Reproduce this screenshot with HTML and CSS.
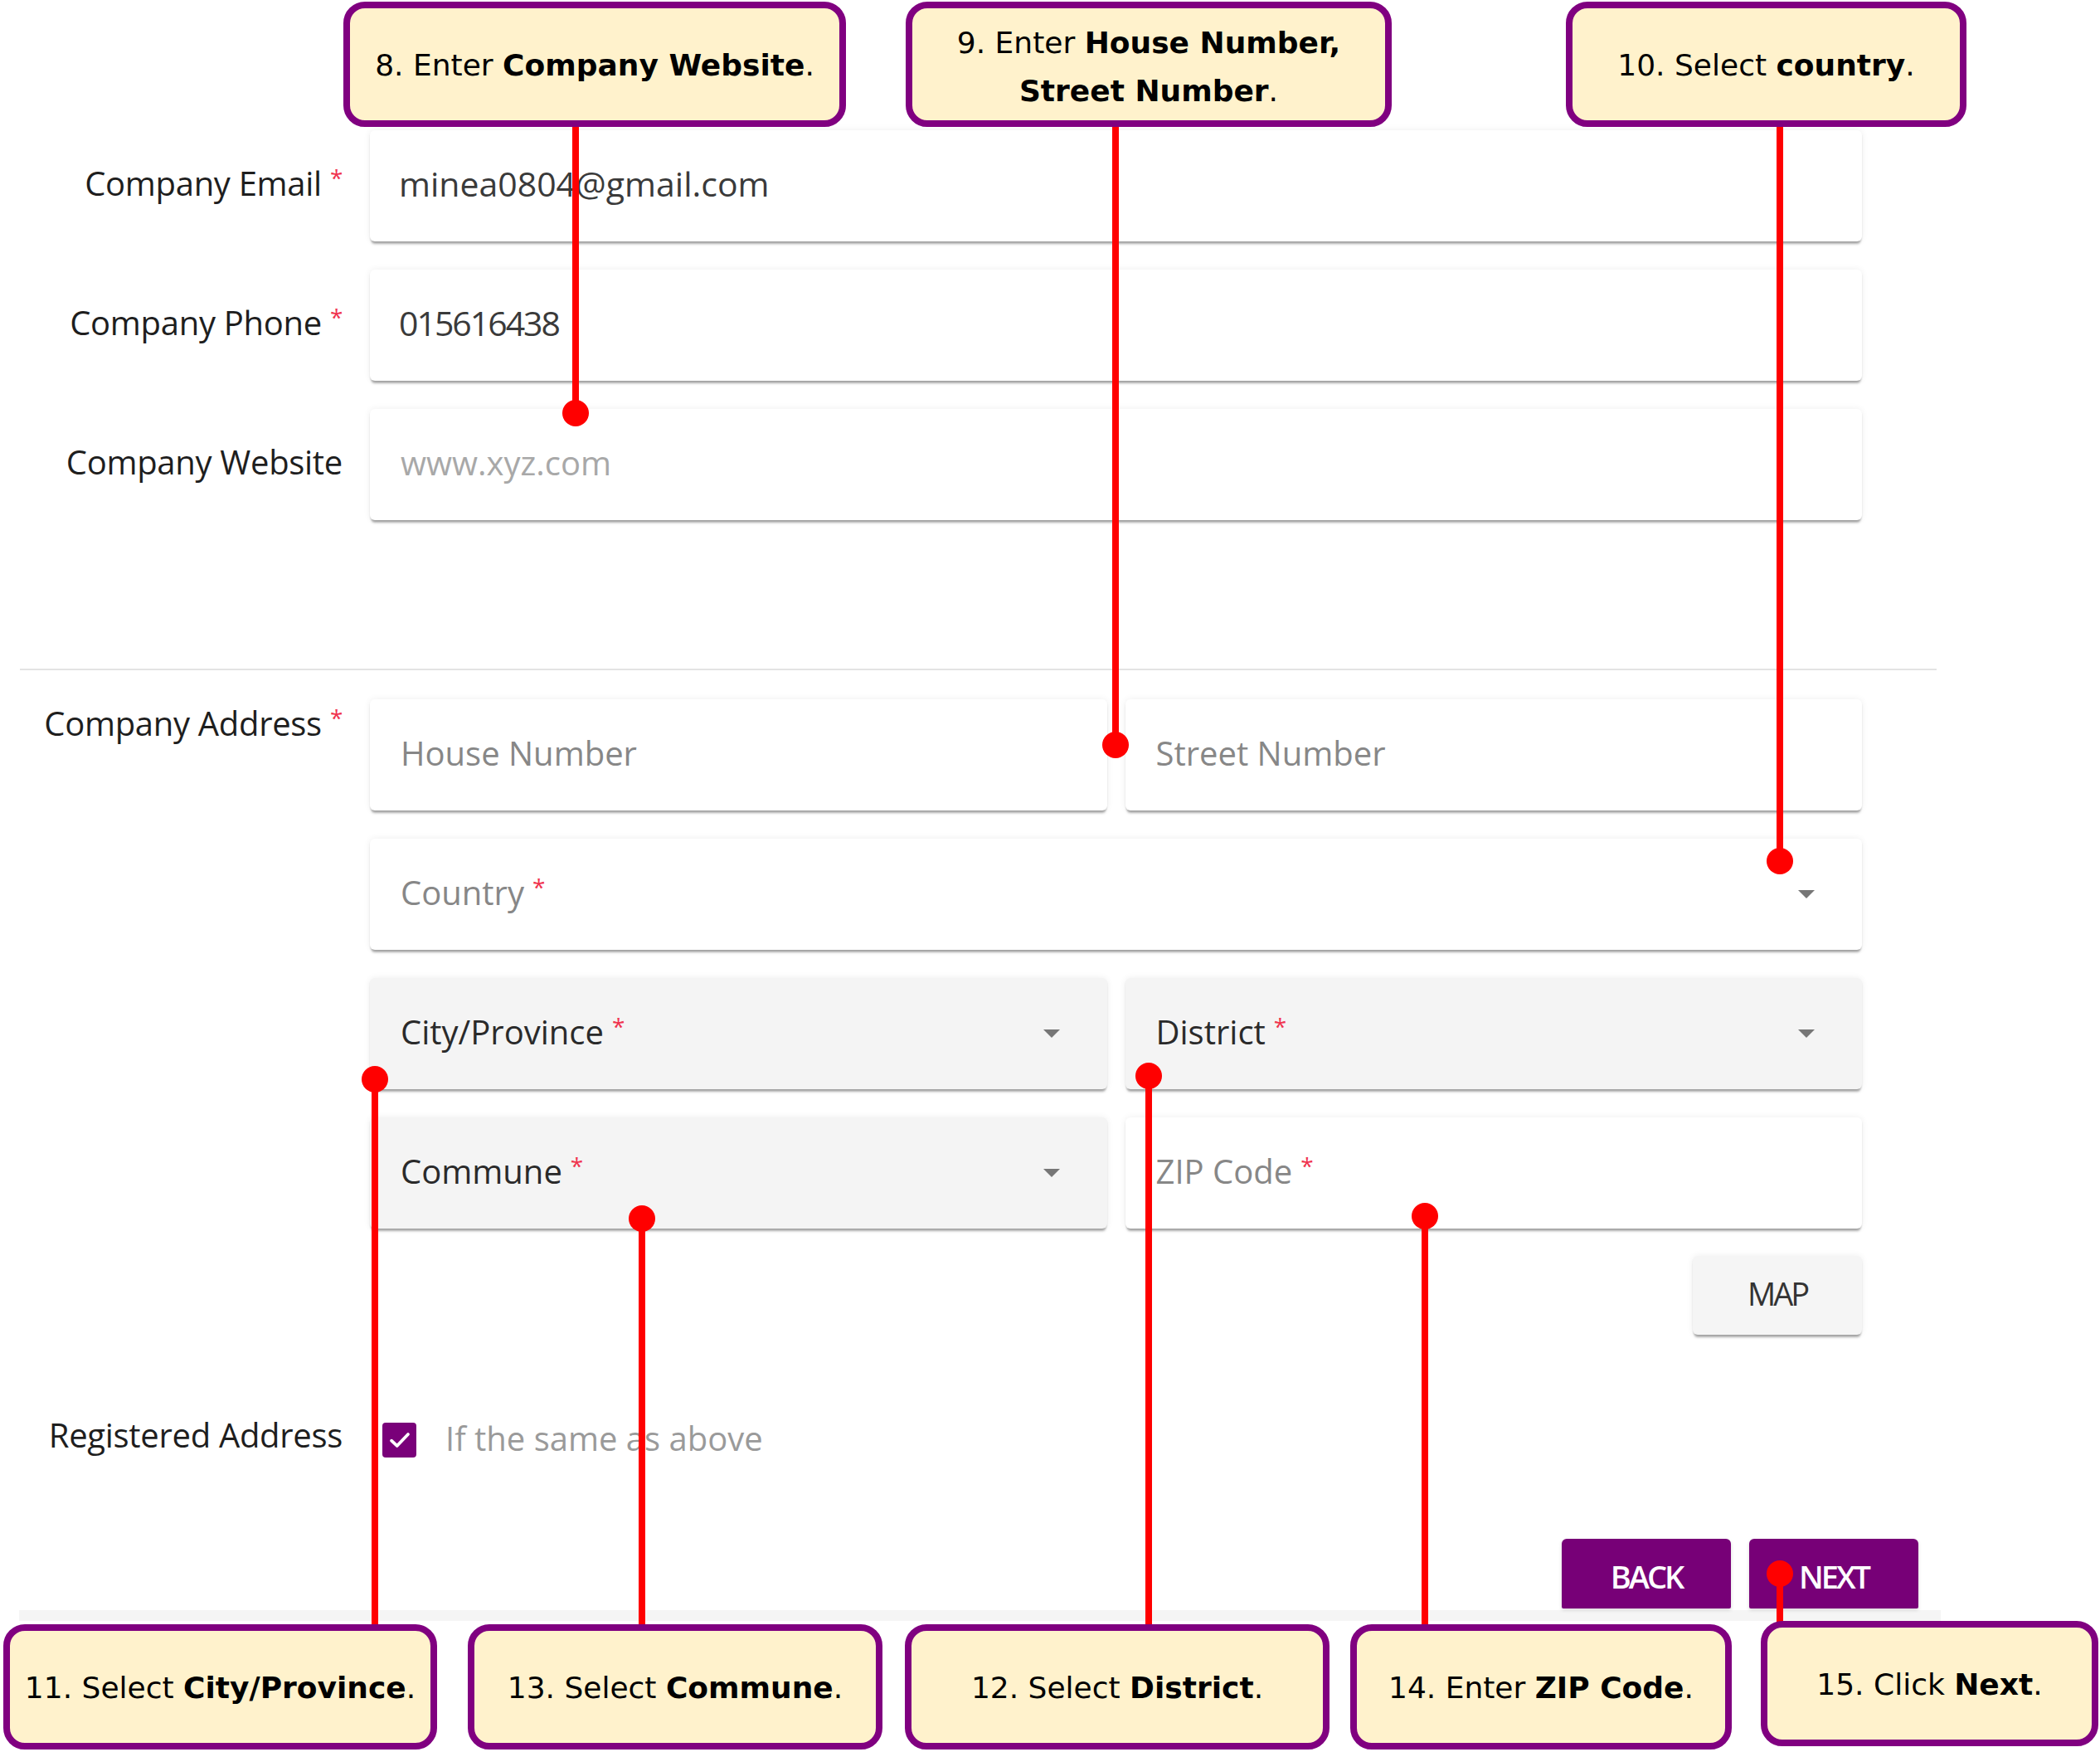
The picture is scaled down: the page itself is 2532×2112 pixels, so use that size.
FILE: index.html
```html
<!DOCTYPE html>
<html lang="en">
<head>
<meta charset="utf-8">
<title>Company Address Form</title>
<link rel="stylesheet" href="styles.css">
</head>
<body>
<div class="page">
  <div class="form">
    <div class="section">
      <div class="row">
        <div class="label">Company Email<span class="req">*</span></div>
        <div class="field value">minea0804@gmail.com</div>
      </div>
      <div class="row">
        <div class="label">Company Phone<span class="req">*</span></div>
        <div class="field value digits">015616438</div>
      </div>
      <div class="row">
        <div class="label">Company Website</div>
        <div class="field"><span class="ph-light">www.xyz.com</span></div>
      </div>
    </div>

    <div class="divider"></div>

    <div class="row row-top address">
      <div class="label label-top">Company Address<span class="req">*</span></div>
      <div class="stack">
        <div class="pair">
          <div class="field"><span class="ph">House Number</span></div>
          <div class="field"><span class="ph">Street Number</span></div>
        </div>
        <div class="field select"><span class="ph">Country<span class="req">*</span></span><span class="caret"></span></div>
        <div class="pair">
          <div class="field select filled"><span class="dark">City/Province<span class="req">*</span></span><span class="caret"></span></div>
          <div class="field select filled"><span class="dark">District<span class="req">*</span></span><span class="caret"></span></div>
        </div>
        <div class="pair">
          <div class="field select filled"><span class="dark">Commune<span class="req">*</span></span><span class="caret"></span></div>
          <div class="field"><span class="ph">ZIP Code<span class="req">*</span></span></div>
        </div>
        <div class="map-wrap"><div class="map-btn">MAP</div></div>
      </div>
    </div>

    <div class="row registered">
      <div class="label">Registered Address</div>
      <div class="check-line">
        <span class="checkbox"><svg viewBox="0 0 24 24" width="32" height="32"><path d="M4.5 12.5 L9.5 17.2 L19.5 6.8" fill="none" stroke="#ffffff" stroke-width="2.8" stroke-linecap="round" stroke-linejoin="round"/></svg></span>
        <span class="check-text">If the same as above</span>
      </div>
    </div>

    <div class="actions">
      <div class="btn">BACK</div>
      <div class="btn">NEXT</div>
    </div>
    <div class="strip"></div>
  </div>

  <div class="annot">
    <div class="vline l8"></div>
    <div class="vline l9"></div>
    <div class="vline l10"></div>
    <div class="vline l11"></div>
    <div class="vline l13"></div>
    <div class="vline l12"></div>
    <div class="vline l14"></div>
    <div class="vline l15"></div>

    <div class="dot d8"></div>
    <div class="dot d9"></div>
    <div class="dot d10"></div>
    <div class="dot d11"></div>
    <div class="dot d13"></div>
    <div class="dot d12"></div>
    <div class="dot d14"></div>
    <div class="dot d15"></div>

    <div class="callout c8"><p>8. Enter <b>Company Website</b>.</p></div>
    <div class="callout c9"><p>9. Enter <b>House Number,</b><br><b>Street Number</b>.</p></div>
    <div class="callout c10"><p>10. Select <b>country</b>.</p></div>
    <div class="callout c11"><p>11. Select <b>City/Province</b>.</p></div>
    <div class="callout c13"><p>13. Select <b>Commune</b>.</p></div>
    <div class="callout c12"><p>12. Select <b>District</b>.</p></div>
    <div class="callout c14"><p>14. Enter <b>ZIP Code</b>.</p></div>
    <div class="callout c15"><p>15. Click <b>Next</b>.</p></div>
  </div>
</div>
</body>
</html>
```

FILE: styles.css
```css
html, body {
  margin: 0;
  padding: 0;
  background: #ffffff;
}

.page {
  position: relative;
  width: 2532px;
  height: 2112px;
  overflow: hidden;
  background: #ffffff;
  font-family: "Open Sans", "Noto Sans", sans-serif;
}

.form {
  padding-top: 157px;
}

.section {
  display: flex;
  flex-direction: column;
  gap: 34px;
}

.row {
  display: grid;
  grid-template-columns: 413px 1799px;
  column-gap: 33px;
  align-items: center;
}

.row-top {
  align-items: start;
}

.label {
  font-size: 40px;
  line-height: 54px;
  padding-bottom: 7px;
  color: #1e1e1e;
  text-align: right;
  white-space: nowrap;
  letter-spacing: -0.3px;
}

.label-top {
  padding-top: 2px;
  padding-bottom: 0;
}

.req {
  color: #f0344f;
  font-size: 28px;
  line-height: 1;
  vertical-align: 11px;
  margin-left: 10px;
}

.field {
  box-sizing: border-box;
  height: 134px;
  padding: 0 36px 6px 37px;
  display: flex;
  align-items: center;
  background: #ffffff;
  border-radius: 6px;
  box-shadow: 0 5px 3px -2px rgba(0, 0, 0, 0.28), 0 2px 2px rgba(0, 0, 0, 0.10), 0 0 8px rgba(0, 0, 0, 0.07);
  font-size: 40px;
  white-space: nowrap;
}

.value {
  color: #3a3a3a;
  font-size: 41px;
  padding-left: 35px;
}

.digits {
  letter-spacing: -2px;
}

.ph {
  color: #878787;
}

.ph-light {
  color: #a8a8a8;
}

.dark {
  color: #2a2a2a;
}

.filled {
  background: #f4f4f4;
}

.select {
  justify-content: space-between;
  padding-right: 57px;
}

.caret {
  width: 0;
  height: 0;
  margin-top: 6px;
  border-left: 10px solid transparent;
  border-right: 10px solid transparent;
  border-top: 10px solid #767676;
}

.divider {
  margin: 179px 0 0 24px;
  width: 2311px;
  height: 2px;
  background: #e3e3e3;
}

.address {
  margin-top: 35px;
}

.stack {
  display: flex;
  flex-direction: column;
  gap: 34px;
}

.pair {
  display: grid;
  grid-template-columns: 1fr 1fr;
  column-gap: 22px;
}

.map-wrap {
  display: flex;
  justify-content: flex-end;
  margin-top: -1px;
}

.map-btn {
  box-sizing: border-box;
  width: 204px;
  height: 95px;
  padding-bottom: 6px;
  display: flex;
  align-items: center;
  justify-content: center;
  background: #f5f5f5;
  border-radius: 6px;
  box-shadow: 0 5px 3px -2px rgba(0, 0, 0, 0.28), 0 2px 2px rgba(0, 0, 0, 0.10), 0 0 8px rgba(0, 0, 0, 0.07);
  font-size: 38px;
  letter-spacing: -3px;
  color: #333333;
}

.registered {
  margin-top: 94px;
}

.check-line {
  display: flex;
  align-items: center;
  height: 54px;
  padding-left: 15px;
}

.checkbox {
  width: 41px;
  height: 42px;
  border-radius: 4px;
  background: #790079;
  display: flex;
  align-items: center;
  justify-content: center;
  margin-top: 4px;
}

.check-text {
  margin-left: 35px;
  font-size: 40px;
  color: #9a9a9a;
}

.actions {
  width: 2313px;
  margin-top: 91px;
  display: flex;
  justify-content: flex-end;
  gap: 22px;
}

.btn {
  box-sizing: border-box;
  width: 204px;
  height: 84px;
  padding-top: 5px;
  display: flex;
  align-items: center;
  justify-content: center;
  background: #770077;
  border-radius: 6px 6px 2px 2px;
  color: #ffffff;
  font-size: 38px;
  font-weight: 600;
  letter-spacing: -3px;
  box-shadow: 0 2px 4px rgba(0, 0, 0, 0.15);
}

.strip {
  margin: 2px 0 0 23px;
  width: 2317px;
  height: 13px;
  background: #f5f5f5;
}

/* annotation overlay */
.annot {
  position: absolute;
  left: 0;
  top: 0;
  width: 2532px;
  height: 2112px;
}

.vline {
  position: absolute;
  width: 8px;
  background: #ff0000;
}

.l8 { left: 690px; top: 150px; height: 348px; }
.l9 { left: 1341px; top: 150px; height: 748px; }
.l10 { left: 2142px; top: 150px; height: 888px; }
.l11 { left: 448px; top: 1301px; height: 662px; }
.l13 { left: 770px; top: 1469px; height: 494px; }
.l12 { left: 1381px; top: 1297px; height: 666px; }
.l14 { left: 1714px; top: 1465px; height: 498px; }
.l15 { left: 2142px; top: 1897px; height: 62px; }

.dot {
  position: absolute;
  width: 32px;
  height: 32px;
  border-radius: 50%;
  background: #ff0000;
}

.d8 { left: 678px; top: 482px; }
.d9 { left: 1329px; top: 882px; }
.d10 { left: 2130px; top: 1022px; }
.d11 { left: 436px; top: 1285px; }
.d13 { left: 758px; top: 1453px; }
.d12 { left: 1369px; top: 1281px; }
.d14 { left: 1702px; top: 1450px; }
.d15 { left: 2130px; top: 1881px; }

.callout {
  position: absolute;
  box-sizing: border-box;
  height: 151px;
  border: 8px solid #800080;
  border-radius: 26px;
  background: #fff2cc;
  display: flex;
  align-items: center;
  justify-content: center;
  text-align: center;
  font-family: "DejaVu Sans", Verdana, sans-serif;
  font-size: 36px;
  color: #000000;
  white-space: nowrap;
}

.callout p {
  margin: 0;
  padding-top: 3px;
  line-height: 58px;
}

.c9 p {
  padding-top: 6px;
}

.callout b {
  font-weight: bold;
}

.c8 { left: 414px; top: 2px; width: 606px; }
.c9 { left: 1092px; top: 2px; width: 586px; }
.c10 { left: 1888px; top: 2px; width: 483px; }
.c11 { left: 4px; top: 1958px; width: 523px; }
.c13 { left: 564px; top: 1958px; width: 500px; }
.c12 { left: 1091px; top: 1958px; width: 512px; }
.c14 { left: 1628px; top: 1958px; width: 460px; }
.c15 { left: 2123px; top: 1954px; width: 407px; }
```
